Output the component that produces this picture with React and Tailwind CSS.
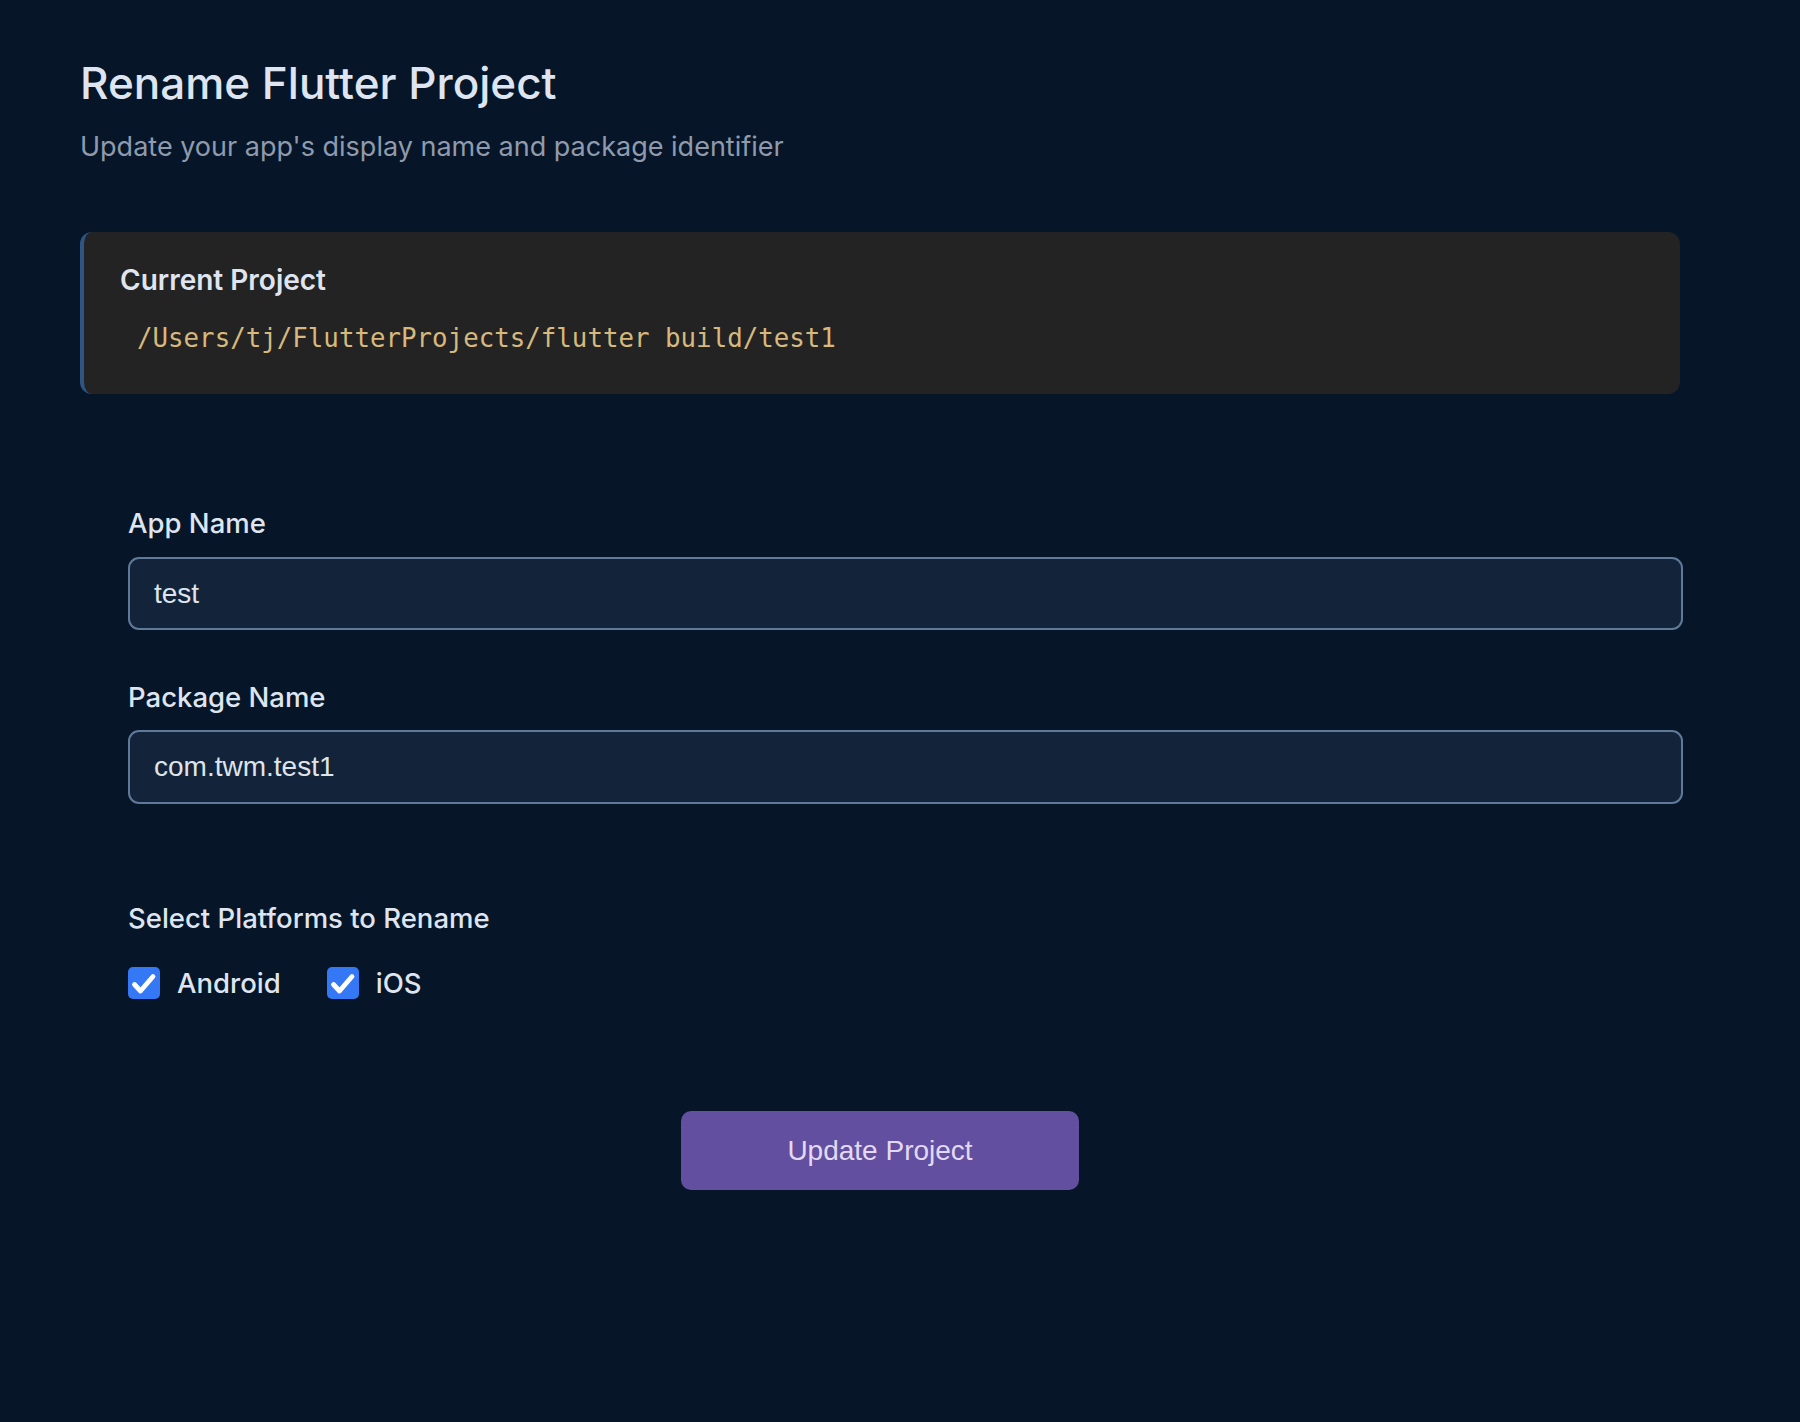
import React from "react";

function Check() {
  return (
    <span className="flex h-[32px] w-[32px] items-center justify-center rounded-[5px] bg-[#3478f6]">
      <svg width="32" height="32" viewBox="0 0 32 32" fill="none">
        <path d="M6.5 17.5l6 6.5L25 9.5" stroke="#ffffff" strokeWidth="4.8" strokeLinecap="round" strokeLinejoin="round" />
      </svg>
    </span>
  );
}

export default function App() {
  return (
    <div className="min-h-[1422px] w-full bg-[#061628] px-[80px] pt-[57px] font-['Inter','Noto_Sans',sans-serif]">
      <div className="w-[1600px]">
        <h1 className="text-[44px] font-medium leading-[52px] text-[#dfe5f0]">
          Rename Flutter Project
        </h1>
        <p className="mt-[22px] text-[27px] leading-[32px] text-[#8f9bad]">
          Update your app's display name and package identifier
        </p>

        <div className="mt-[69px] h-[162px] rounded-[12px] border-l-4 border-[#2f5583] bg-[#232323] pl-[36px] pt-[30px]">
          <div className="text-[28px] font-semibold leading-[36px] text-[#dfe5f0]">
            Current Project
          </div>
          <div className="mt-[24px] pl-[17px] font-['DejaVu_Sans_Mono',monospace] text-[25.8px] leading-[32px] text-[#d7b97d]">
            /Users/tj/FlutterProjects/flutter build/test1
          </div>
        </div>

        <div className="ml-[48px] w-[1555px]">
          <label className="mt-[112px] block text-[27.5px] font-medium leading-[34px] text-[#dfe5f0]">
            App Name
          </label>
          <div className="mt-[17px] flex h-[73px] items-center rounded-[11px] border-2 border-[#5f7a99] bg-[#13233a] pl-[24px] font-['Liberation_Sans',Arial,sans-serif] text-[28px] text-[#dfe3ea]">
            test
          </div>

          <label className="mt-[50px] block text-[27.5px] font-medium leading-[34px] text-[#dfe5f0]">
            Package Name
          </label>
          <div className="mt-[16px] flex h-[74px] items-center rounded-[11px] border-2 border-[#5f7a99] bg-[#13233a] pl-[24px] font-['Liberation_Sans',Arial,sans-serif] text-[28px] text-[#dfe3ea]">
            com.twm.test1
          </div>

          <div className="mt-[97px] text-[27.5px] font-medium leading-[34px] text-[#dfe5f0]">
            Select Platforms to Rename
          </div>

          <div className="mt-[31px] flex h-[34px] items-center gap-[46px]">
            <div className="flex items-center gap-[17px]">
              <Check />
              <span className="text-[27.5px] font-medium leading-[34px] text-[#dfe5f0]">Android</span>
            </div>
            <div className="flex items-center gap-[17px]">
              <Check />
              <span className="text-[27.5px] font-medium leading-[34px] text-[#dfe5f0]">iOS</span>
            </div>
          </div>
        </div>

        <div className="mt-[111px] flex justify-center">
          <button className="h-[79px] w-[398px] rounded-[10px] bg-[#634f9f] font-['Liberation_Sans',Arial,sans-serif] text-[28px] text-[#e2daf2]">
            Update Project
          </button>
        </div>
      </div>
    </div>
  );
}
